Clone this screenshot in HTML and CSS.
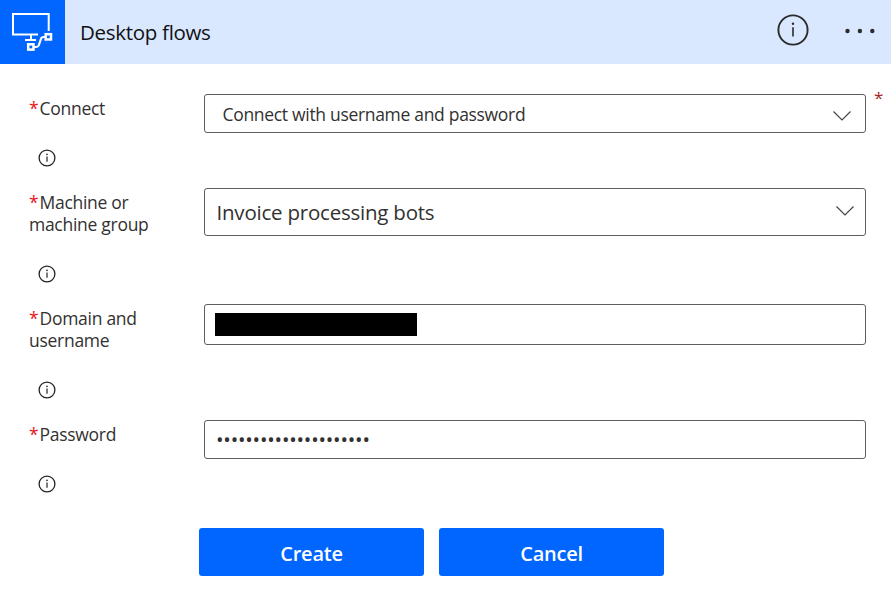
FILE: index.html
```html
<!DOCTYPE html>
<html lang="en">
<head>
<meta charset="utf-8">
<title>Desktop flows</title>
<link rel="stylesheet" href="styles.css">
</head>
<body>
<svg width="0" height="0" class="defs">
  <symbol id="info" viewBox="0 0 18 18"><circle cx="9" cy="9" r="7.9" fill="none" stroke="currentColor" stroke-width="1.3"/><path d="M9 7.4v5.4" stroke="currentColor" stroke-width="1.2"/><circle cx="9" cy="5.4" r=".8" fill="currentColor"/></symbol>
  <symbol id="chevron" viewBox="0 0 20 12"><path d="M1.5 1.5 10 10l8.500-8.500" fill="none" stroke="currentColor" stroke-width="1.2"/></symbol>
</svg>
<header class="header">
  <div class="logo">
    <svg width="65" height="64" viewBox="0 0 65 64" fill="none" stroke="#fff" stroke-width="2">
      <path d="M48.700 31V14H13v20.500h25M31 35v5M25 40h11"/>
      <path d="M45 37H43.500q-2 0-2.600 2l-2 6q-.6 2-2.500 2H34" stroke-width="2.200"/>
      <rect x="45.700" y="34.200" width="5.300" height="5.300" stroke-width="2.500"/>
      <rect x="28.200" y="44.300" width="5.300" height="5.300" stroke-width="2.500"/>
    </svg>
  </div>
  <h1 class="title">Desktop flows</h1>
  <svg class="header-info" width="32" height="32" viewBox="0 0 32 32"><circle cx="16" cy="16" r="14.600" fill="none" stroke="#2b2b2b" stroke-width="1.900"/><path d="M16 13.300v9.200" stroke="#2b2b2b" stroke-width="1.600"/><circle cx="16" cy="9.800" r="1.200" fill="#2b2b2b"/></svg>
  <svg class="more" width="32" height="6" viewBox="0 0 32 6" fill="#2b2b2b"><circle cx="3.500" cy="3" r="2.200"/><circle cx="15.900" cy="3" r="2.200"/><circle cx="28.300" cy="3" r="2.200"/></svg>
</header>
<main class="form">
  <section class="row row-short">
    <div class="side"><label class="label"><span class="star">*</span>Connect</label><svg class="info"><use href="#info"/></svg></div>
    <div class="field connect"><span class="value">Connect with username and password</span><svg class="chevron"><use href="#chevron"/></svg></div>
    <span class="star outer">*</span>
  </section>
  <section class="row">
    <div class="side"><label class="label"><span class="star">*</span>Machine or<br>machine group</label><svg class="info"><use href="#info"/></svg></div>
    <div class="field machine"><span class="value">Invoice processing bots</span><svg class="chevron"><use href="#chevron"/></svg></div>
  </section>
  <section class="row">
    <div class="side"><label class="label"><span class="star">*</span>Domain and<br>username</label><svg class="info"><use href="#info"/></svg></div>
    <div class="field domain"><span class="redacted"></span></div>
  </section>
  <section class="row row-last">
    <div class="side"><label class="label"><span class="star">*</span>Password</label><svg class="info"><use href="#info"/></svg></div>
    <div class="field password"><span class="value">•••••••••••••••••••••</span></div>
  </section>
  <div class="actions"><button class="button">Create</button><button class="button">Cancel</button></div>
</main>
</body>
</html>
```
FILE: styles.css
```css
* { box-sizing: border-box; }
body { margin: 0; background: #fff; color: #323130; font-family: "Open Sans", "Noto Sans", sans-serif; }
svg { display: block; flex: none; }
.defs { position: absolute; }
.header { display: flex; align-items: center; height: 64px; background: #d9e7ff; }
.logo { width: 65px; height: 64px; background: #06f; }
.title { flex: 1; margin: 0 0 0 15px; font-size: 20.500px; font-weight: 400; line-height: 28px; letter-spacing: -.3px; color: #111; }
.header-info { margin: 0 35px 5px 0; }
.more { margin-right: 15px; margin-bottom: 3px; }
.form { padding: 30px 0 0 29px; }
.row { display: grid; grid-template-columns: 175px 662px 1fr; align-items: start; height: 116px; }
.row-short { height: 94px; }
.row-last { height: 108px; }
.side { display: flex; flex-direction: column; justify-content: space-between; height: 95px; padding-top: 3px; }
.row-short .side, .row-last .side { height: 73px; }
.label { font-size: 17.500px; line-height: 22px; letter-spacing: -.28px; white-space: nowrap; }
.star { display: inline-block; width: 10.500px; color: #e81818; }
.outer { margin-top: -6px; padding-left: 8px; font-size: 17px; line-height: 20px; color: #a4262c; }
.info { width: 18px; height: 18px; margin-left: 8.500px; color: #222; }
.field { display: flex; align-items: center; justify-content: space-between; border: 1px solid #605e5c; border-radius: 3px; white-space: nowrap; }
.connect { height: 39px; padding: 0 13px 0 17.500px; font-size: 17.500px; letter-spacing: -.31px; }
.connect .value { line-height: 24px; }
.chevron { width: 20px; height: 12px; margin-top: 5px; color: #444; }
.machine { height: 48px; padding: 0 10px 0 11.500px; font-size: 20.500px; letter-spacing: -.22px; }
.machine .chevron { margin: 0 0 3px; }
.domain { height: 41px; padding-left: 10px; }
.redacted { width: 202px; height: 23px; background: #000; }
.password { height: 39px; padding-left: 11px; font-size: 20px; letter-spacing: -.2px; }
.actions { display: flex; gap: 15px; margin-left: 170px; }
.button { width: 225px; height: 48px; padding: 2px 0 0; border: 0; border-radius: 3px; background: #06f; color: #fff; font: 600 20px "Open Sans", sans-serif; letter-spacing: -.25px; }
```
